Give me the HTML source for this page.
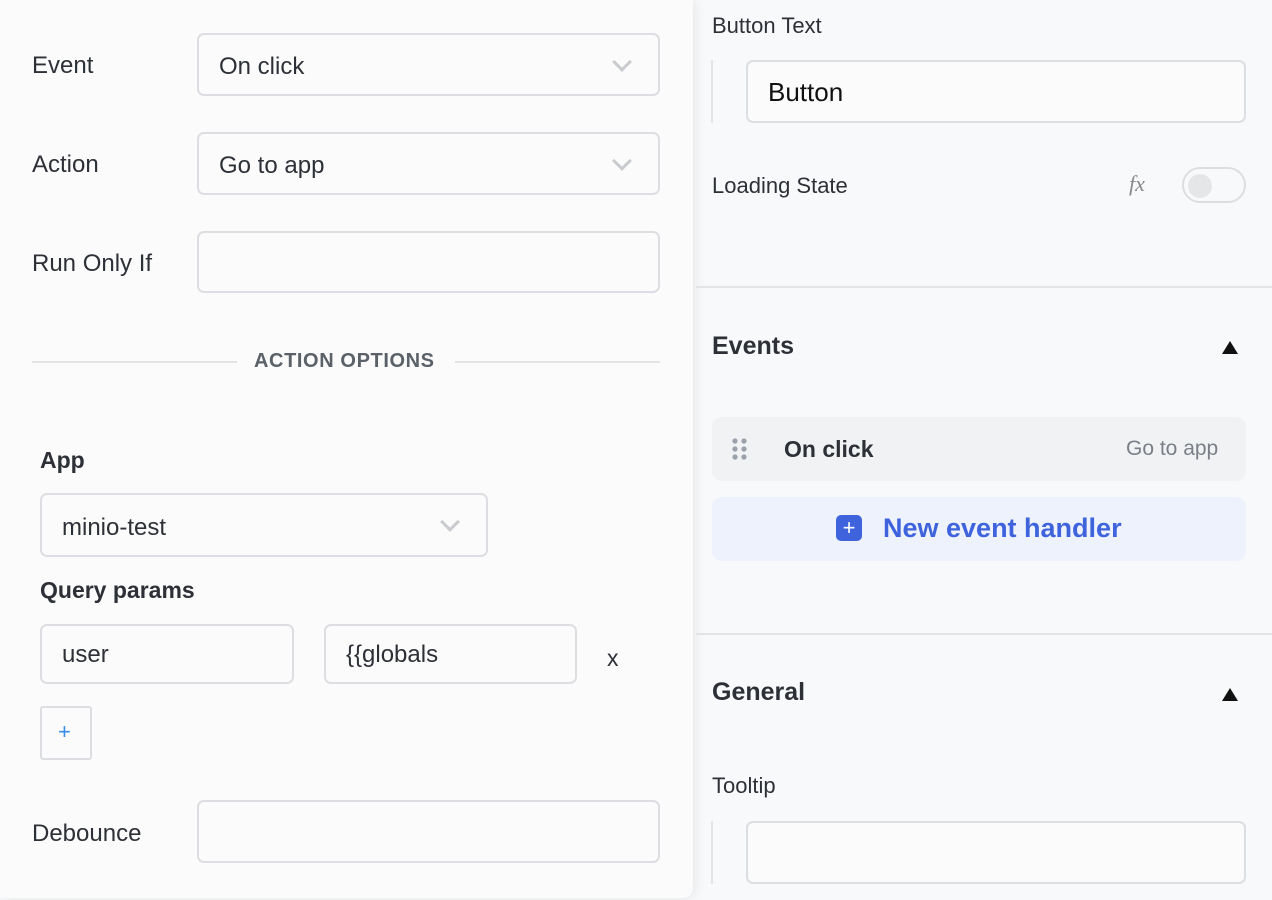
<!DOCTYPE html>
<html><head><style>
body{margin:0;width:1272px;height:900px;background:#f8f9fa;font-family:"Liberation Sans",sans-serif;color:#2d3036;position:relative;overflow:hidden}
.a{position:absolute}
.lp{position:absolute;left:0;top:0;width:693px;height:898px;background:#fbfbfb;border-radius:0 0 10px 0;box-shadow:2px 0 12px rgba(0,0,0,.08)}
.box{position:absolute;border:2px solid #dcdee1;border-radius:7px;background:#fbfbfb;box-sizing:border-box}
.t{position:absolute;font-size:24px;white-space:nowrap}
.chev{position:absolute;width:11px;height:11px;border-right:3px solid #c9cbce;border-bottom:3px solid #c9cbce;transform:rotate(45deg)}
.hr{position:absolute;height:2px;background:#e3e4e6}
</style></head><body>
<div class="lp"></div>
<div class="t" style="left:32px;top:52px">Event</div>
<div class="box" style="left:197px;top:33px;width:463px;height:63px"></div>
<div class="t" style="left:219px;top:53px">On click</div>
<div class="chev" style="left:615px;top:55px"></div>
<div class="t" style="left:32px;top:151px">Action</div>
<div class="box" style="left:197px;top:132px;width:463px;height:63px"></div>
<div class="t" style="left:219px;top:152px">Go to app</div>
<div class="chev" style="left:615px;top:154px"></div>
<div class="t" style="left:32px;top:250px">Run Only If</div>
<div class="box" style="left:197px;top:231px;width:463px;height:62px"></div>
<div class="hr" style="left:32px;top:361px;width:205px"></div>
<div class="hr" style="left:455px;top:361px;width:205px"></div>
<div class="t" style="left:254px;top:350px;font-size:20px;font-weight:bold;color:#5b6168;letter-spacing:.6px">ACTION OPTIONS</div>
<div class="t" style="left:40px;top:447px;font-weight:bold;font-size:23px">App</div>
<div class="box" style="left:40px;top:493px;width:448px;height:64px"></div>
<div class="t" style="left:62px;top:514px">minio-test</div>
<div class="chev" style="left:443px;top:515px"></div>
<div class="t" style="left:40px;top:577px;font-weight:bold;font-size:23px">Query params</div>
<div class="box" style="left:40px;top:624px;width:254px;height:60px"></div>
<div class="t" style="left:62px;top:641px">user</div>
<div class="box" style="left:324px;top:624px;width:253px;height:60px"></div>
<div class="t" style="left:346px;top:641px">{{globals</div>
<div class="t" style="left:607px;top:645px;font-size:23px">x</div>
<div class="box" style="left:40px;top:706px;width:52px;height:54px;border-radius:3px"></div>
<div class="t" style="left:58px;top:719px;color:#3a8be8;font-size:22px">+</div>
<div class="t" style="left:32px;top:820px">Debounce</div>
<div class="box" style="left:197px;top:800px;width:463px;height:63px"></div>

<div class="t" style="left:712px;top:13px;font-size:22px">Button Text</div>
<div class="a" style="left:711px;top:60px;width:2px;height:63px;background:#e3e4e6"></div>
<div class="box" style="left:746px;top:60px;width:500px;height:63px"></div>
<div class="t" style="left:768px;top:77px;font-size:26px;color:#111">Button</div>
<div class="t" style="left:712px;top:173px;font-size:22px">Loading State</div>
<div class="t" style="left:1129px;top:171px;font-size:22px;font-style:italic;color:#888;font-family:'Liberation Serif',serif">fx</div>
<div class="a" style="left:1182px;top:167px;width:64px;height:36px;border:2px solid #dcdee1;border-radius:18px;box-sizing:border-box"></div>
<div class="a" style="left:1188px;top:174px;width:24px;height:24px;border-radius:50%;background:#e4e6e8"></div>
<div class="hr" style="left:696px;top:286px;width:576px"></div>
<div class="t" style="left:712px;top:332px;font-size:25px;font-weight:bold">Events</div>
<div class="a" style="left:1222px;top:341px;width:0;height:0;border-left:8px solid transparent;border-right:8px solid transparent;border-bottom:13px solid #111"></div>
<div class="a" style="left:712px;top:417px;width:534px;height:64px;background:#f1f2f4;border-radius:10px"></div>
<svg class="a" style="left:731px;top:438px" width="18" height="22"><g fill="#9aa1aa"><circle cx="4" cy="3" r="2.6"/><circle cx="13" cy="3" r="2.6"/><circle cx="4" cy="11" r="2.6"/><circle cx="13" cy="11" r="2.6"/><circle cx="4" cy="19" r="2.6"/><circle cx="13" cy="19" r="2.6"/></g></svg>
<div class="t" style="left:784px;top:436px;font-size:23px;font-weight:bold">On click</div>
<div class="t" style="left:1126px;top:437px;font-size:21px;color:#7b8088">Go to app</div>
<div class="a" style="left:712px;top:497px;width:534px;height:64px;background:#eef2fd;border-radius:10px"></div>
<div class="a" style="left:836px;top:515px;width:26px;height:26px;background:#3e63dd;border-radius:5px;color:#fff;font-size:22px;line-height:25px;text-align:center">+</div>
<div class="t" style="left:883px;top:513px;font-size:27px;font-weight:bold;color:#3e63dd">New event handler</div>
<div class="hr" style="left:696px;top:633px;width:576px"></div>
<div class="t" style="left:712px;top:678px;font-size:25px;font-weight:bold">General</div>
<div class="a" style="left:1222px;top:688px;width:0;height:0;border-left:8px solid transparent;border-right:8px solid transparent;border-bottom:13px solid #111"></div>
<div class="t" style="left:712px;top:773px;font-size:22px">Tooltip</div>
<div class="a" style="left:711px;top:821px;width:2px;height:63px;background:#e3e4e6"></div>
<div class="box" style="left:746px;top:821px;width:500px;height:63px"></div>
</body></html>
